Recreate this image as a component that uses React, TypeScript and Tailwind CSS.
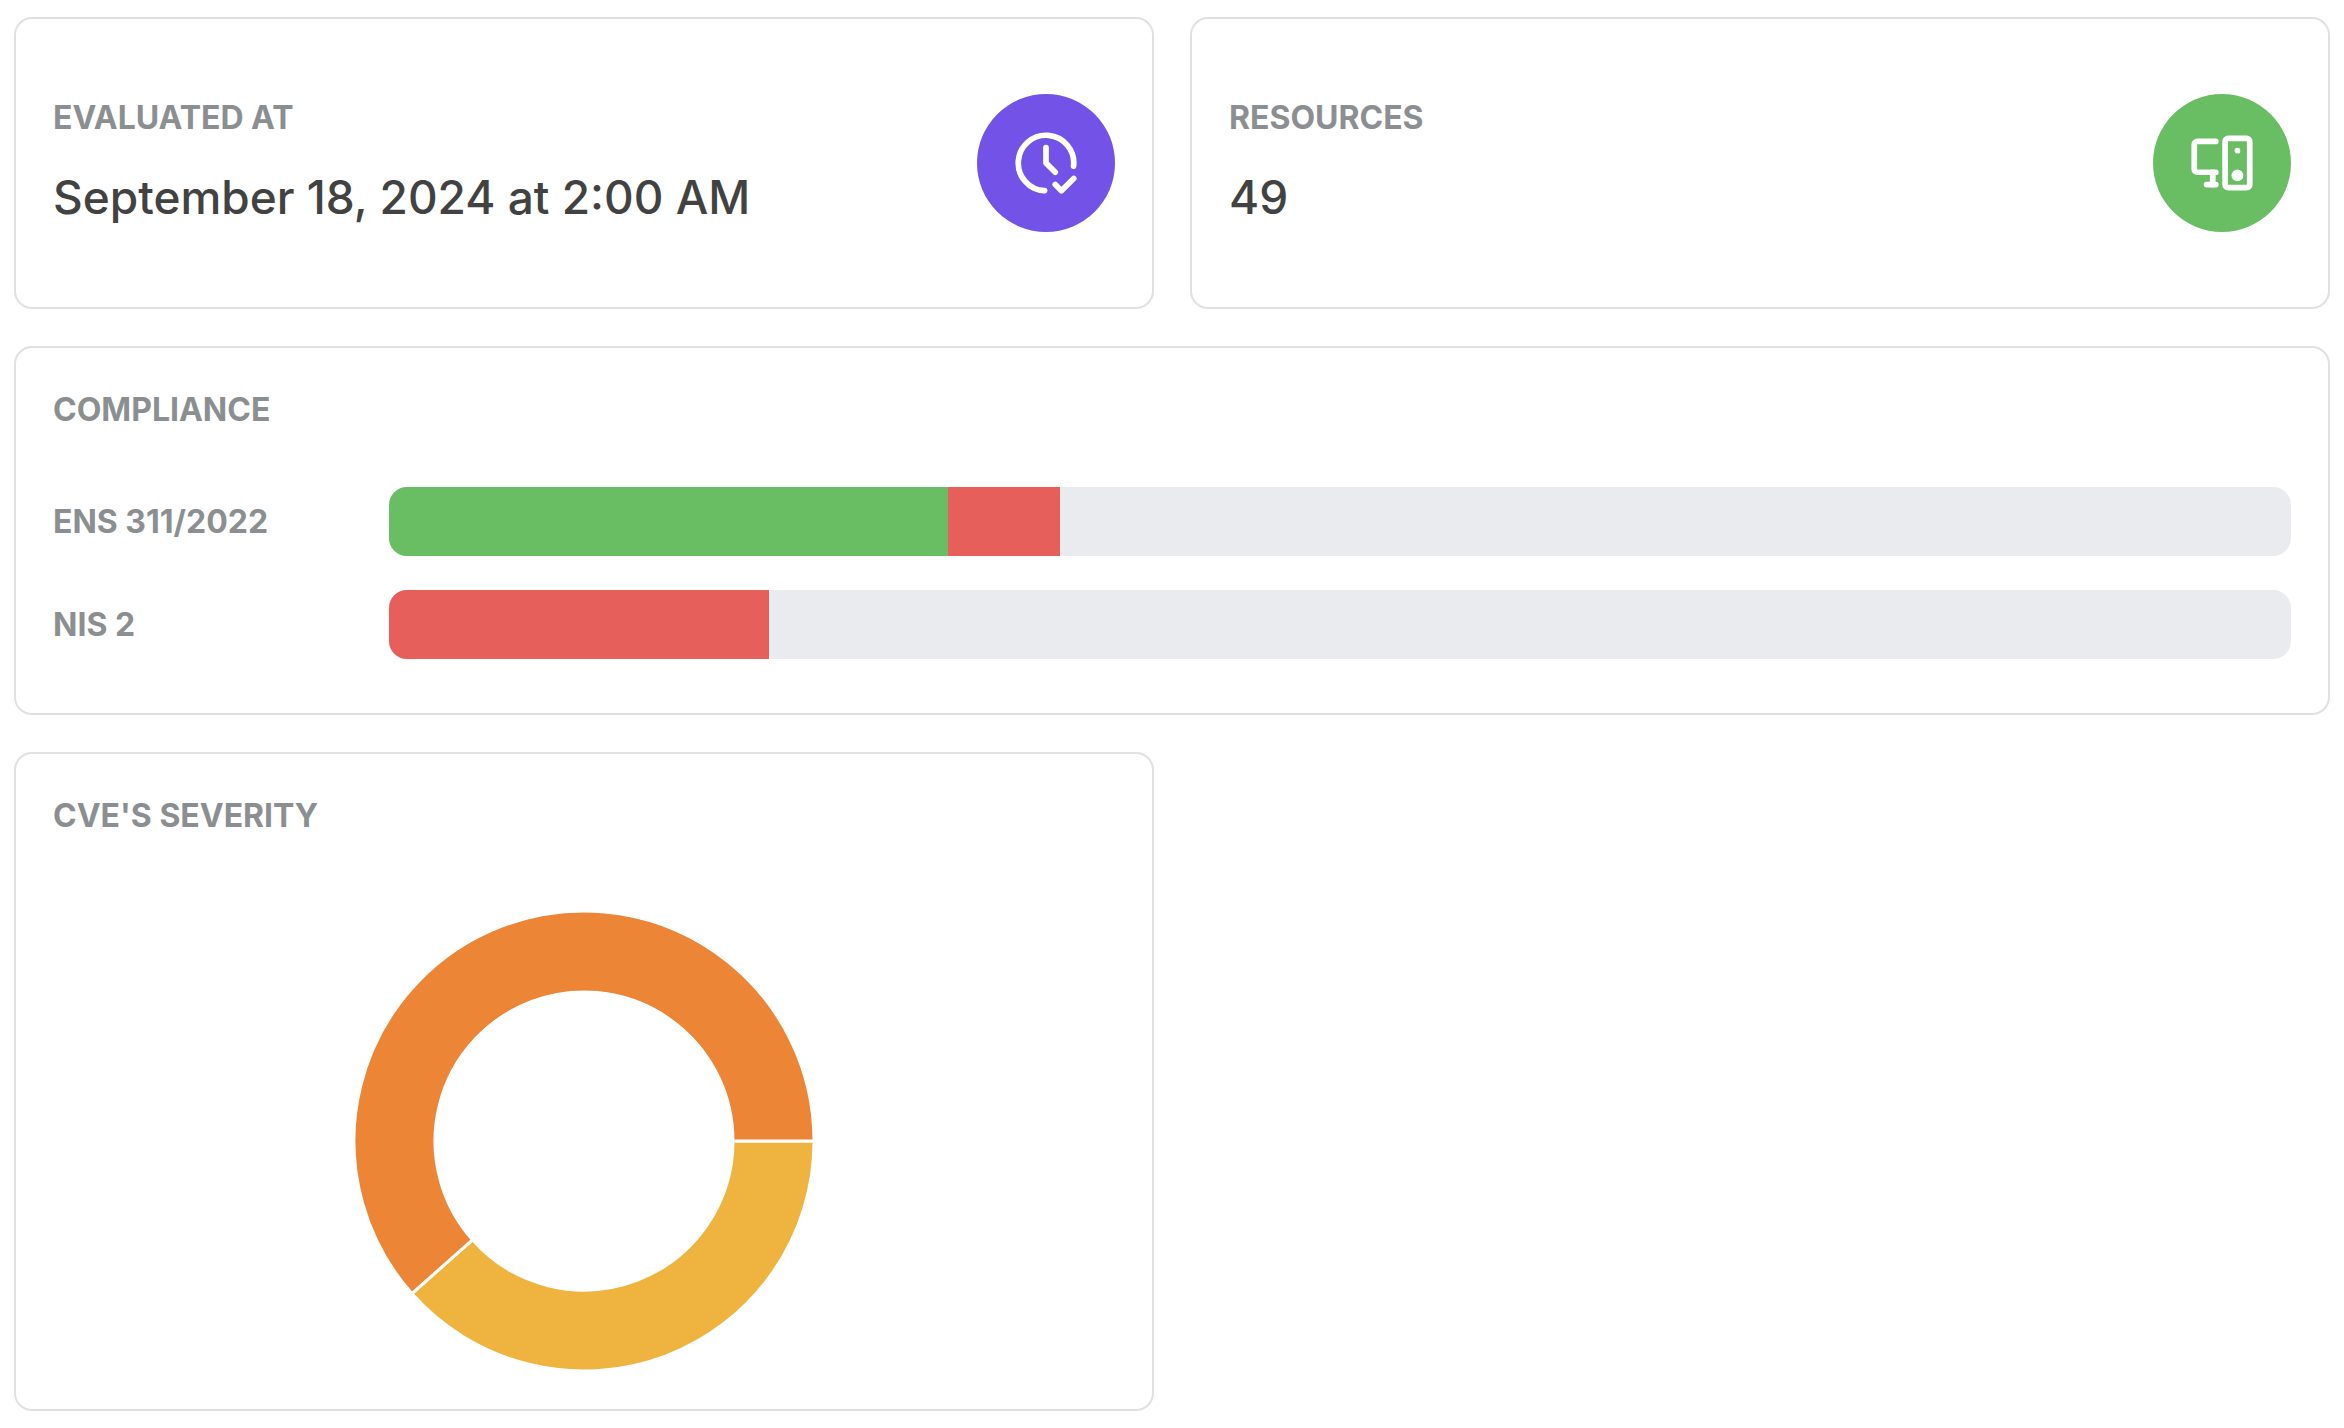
import type { ReactNode } from "react"

interface StatCardProps {
  label: string
  value: string
  iconClassName: string
  icon: ReactNode
}

interface ComplianceItem {
  name: string
  passed: number
  failed: number
  total: number
}

interface SeveritySlice {
  name: string
  count: number
  color: string
}

const complianceItems: ComplianceItem[] = [
  { name: "ENS 311/2022", passed: 5, failed: 1, total: 17 },
  { name: "NIS 2", passed: 0, failed: 1, total: 5 },
]

const severitySlices: SeveritySlice[] = [
  { name: "Medium", count: 5, color: "#efb340" },
  { name: "High", count: 8, color: "#ec8536" },
]

function Card({ className, children }: { className: string; children: ReactNode }) {
  return <section className={`rounded-[18px] border-2 border-[#e1e1e2] bg-white px-[37px] ${className}`}>{children}</section>
}

function CardTitle({ children }: { children: ReactNode }) {
  return <h2 className="text-[32px] leading-[50px] font-bold text-[#8b8f92]">{children}</h2>
}

function ClockCheckIcon() {
  return (
    <svg viewBox="0 0 24 24" className="size-[74px]" fill="none" stroke="currentColor" strokeWidth="1.85" strokeLinecap="round" strokeLinejoin="round" aria-hidden="true">
      <path d="M20.942 13.021a9 9 0 1 0-9.407 7.967" />
      <path d="M12 7v5l3 3" />
      <path d="M15 19l2 2l4-4" />
    </svg>
  )
}

function ComputerIcon() {
  return (
    <svg viewBox="0 0 24 24" className="size-[74px]" fill="none" stroke="currentColor" strokeWidth="1.85" strokeLinecap="round" strokeLinejoin="round" aria-hidden="true">
      <path d="M10 5H4a1 1 0 0 0-1 1v8a1 1 0 0 0 1 1h6" />
      <path d="M9 15v4" />
      <path d="M7 19h3" />
      <rect x="13" y="4" width="8" height="16" rx="1" />
      <path d="M17 8v.01" />
      <circle cx="17" cy="16" r="1" />
    </svg>
  )
}

function StatCard({ label, value, iconClassName, icon }: StatCardProps) {
  return (
    <Card className="flex items-center justify-between py-[74px]">
      <div className="flex flex-col gap-[18px]">
        <CardTitle>{label}</CardTitle>
        <p className="text-[46px] leading-[72px] font-medium text-[#424242]">{value}</p>
      </div>
      <div className={`flex size-[138px] shrink-0 items-center justify-center rounded-full text-white ${iconClassName}`}>{icon}</div>
    </Card>
  )
}

function ComplianceRow({ item }: { item: ComplianceItem }) {
  return (
    <div className="flex items-center">
      <h3 className="w-[336px] shrink-0 text-[32px] leading-[50px] font-bold text-[#8b8f92]">{item.name}</h3>
      <div className="flex h-[69px] flex-1 overflow-hidden rounded-[18px] bg-[#eaebee]">
        <div className="bg-[#69be63]" style={{ width: `${(item.passed / item.total) * 100}%` }} />
        <div className="bg-[#e65f5a]" style={{ width: `${(item.failed / item.total) * 100}%` }} />
      </div>
    </div>
  )
}

// Slices run clockwise, starting at three o'clock
function slicePath(from: number, to: number) {
  const outer = 230
  const inner = 149
  const point = (radius: number, turn: number) => {
    const angle = turn * 2 * Math.PI
    return `${230 + radius * Math.cos(angle)} ${230 + radius * Math.sin(angle)}`
  }
  const large = to - from > 0.5 ? 1 : 0
  return `M${point(outer, from)}A${outer} ${outer} 0 ${large} 1 ${point(outer, to)}L${point(inner, to)}A${inner} ${inner} 0 ${large} 0 ${point(inner, from)}Z`
}

function SeverityChart({ slices }: { slices: SeveritySlice[] }) {
  const total = slices.reduce((sum, slice) => sum + slice.count, 0)
  let start = 0

  return (
    <svg viewBox="0 0 460 460" className="size-[460px]" aria-hidden="true">
      {slices.map((slice) => {
        const from = start
        start += slice.count / total
        return <path key={slice.name} d={slicePath(from, start)} fill={slice.color} stroke="#fff" strokeWidth="3" />
      })}
    </svg>
  )
}

export default function App() {
  return (
    <main className="grid grid-cols-2 gap-x-9 gap-y-[37px] bg-white px-[14px] pt-[17px] font-['Inter',sans-serif]">
      <StatCard label="EVALUATED AT" value="September 18, 2024 at 2:00 AM" iconClassName="bg-[#7352e8]" icon={<ClockCheckIcon />} />
      <StatCard label="RESOURCES" value="49" iconClassName="bg-[#69be63]" icon={<ComputerIcon />} />

      <Card className="col-span-2 pt-[37px] pb-[54px]">
        <CardTitle>COMPLIANCE</CardTitle>
        <div className="mt-[52px] flex flex-col gap-[34px]">
          {complianceItems.map((item) => (
            <ComplianceRow key={item.name} item={item} />
          ))}
        </div>
      </Card>

      <Card className="pt-[37px] pb-[38px]">
        <CardTitle>CVE'S SEVERITY</CardTitle>
        <div className="mt-[70px] flex justify-center">
          <SeverityChart slices={severitySlices} />
        </div>
      </Card>
    </main>
  )
}
